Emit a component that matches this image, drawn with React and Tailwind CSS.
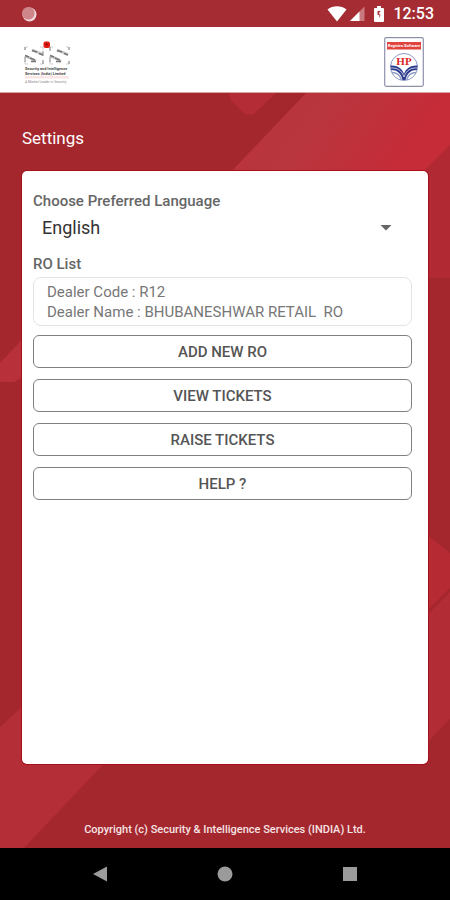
import React, { useState } from 'react';

const actions = ['ADD NEW RO', 'VIEW TICKETS', 'RAISE TICKETS', 'HELP ?'];

const dealer = {
  code: 'R12',
  name: 'BHUBANESHWAR RETAIL  RO',
};

function StatusBar() {
  return (
    <div className="flex h-[27px] items-center justify-between bg-[#a52c33] pl-[21px] pr-4 text-white">
      <svg className="size-4" viewBox="0 0 16 16" aria-hidden="true">
        <circle cx="8.5" cy="8.5" r="7" fill="#f3d9db" />
        <circle cx="7.3" cy="7.3" r="6.3" fill="#cf868b" />
      </svg>
      <div className="flex items-center">
        <svg className="h-4 w-5" viewBox="0 0 20 16" fill="#fff" aria-hidden="true">
          <path d="M0.5 3.5C6-0.7 14-0.7 19.5 3.5L10 15.5Z" />
        </svg>
        <svg className="ml-0.5 h-4 w-4" viewBox="0 0 16 16" aria-hidden="true">
          <path d="M15.5 0.5V15H1Z" fill="#c97a7f" />
          <path d="M10.5 5.5V15H1Z" fill="#fff" />
        </svg>
        <svg className="ml-2 mr-0.5 h-4 w-3" viewBox="0 0 12 16" aria-hidden="true">
          <path d="M4 0h4v2h2q1 0 1 1v12q0 1-1 1H2q-1 0-1-1V3q0-1 1-1h2z" fill="#fff" />
          <path d="M7.8 5H4.600V9H6.300V12.500L7.600 8.500H6.200V6.500Z" fill="#a52c33" />
        </svg>
        <span className="ml-1.5 text-base font-medium leading-5">12:53</span>
      </div>
    </div>
  );
}

function SisLogo() {
  return (
    <svg className="mt-0.5 h-[43px] w-[46px]" viewBox="0 0 46 43" role="img" aria-label="SIS">
      <g fill="none" stroke="#cfcfcf" strokeWidth="1">
        <path d="M1 9V6h3M16 6h3v3M1 20v3h3M16 23h3v-3M26 9V6h3M42 6h3v3M26 20v3h3M42 23h3v-3" />
      </g>
      <g fill="none" stroke="#c4c4c4" strokeWidth="2.6">
        <path d="M8 9l5 2 6 2.500M1 15l5 2 6 3.500M33 9l5 2 6 2.500M26 15l5 2 6 3.500" />
      </g>
      <g fill="none" stroke="#777" strokeWidth="1.4">
        <path d="M8 9.500l5 1.500M15 12.500l4 1.500M1 14.500l4 1.500M6 17l5 2M33 9.500l5 1.500M40 12.500l4 1.500M26 14.500l4 1.500M31 17l5 2" />
        <path d="M7 20.500h5M32 20.500h5" />
      </g>
      <g fill="none" stroke="#888" strokeWidth="1">
        <path d="M1 6v3M1 16v5M19 10v5M19 19v4M26 6v4M26 16v5M45 6v3M45 20v3" />
      </g>
      <rect x="19.500" y="0.500" width="6.500" height="6.500" rx="2" fill="#e31b12" />
      <path d="M22.700 2v3M21.200 3.500h3" stroke="#8e0d08" strokeWidth="0.8" />
      <g fontFamily="Roboto, sans-serif" fontSize="3.800" fontWeight="700" fill="#444">
        <text x="1" y="28.500">Security and Intelligence</text>
        <text x="1" y="33.500">Services (India) Limited</text>
      </g>
      <rect x="1" y="35" width="44" height="2.500" fill="#fbe6e6" />
      <text x="1" y="41.500" fontFamily="Roboto, sans-serif" fontSize="3.400" fill="#888">A Market Leader in Security</text>
    </svg>
  );
}

function HpLogo() {
  return (
    <svg className="h-[50px] w-10" viewBox="0 0 40 50" role="img" aria-label="HP">
      <rect x="0.7" y="0.7" width="38.6" height="48.6" rx="1.5" fill="#fff" stroke="#8f90ac" strokeWidth="1.2" />
      <rect x="3" y="5" width="34" height="7.5" fill="#e0443d" />
      <text x="20" y="10.4" textAnchor="middle" fontFamily="Roboto, sans-serif" fontSize="4" fontWeight="700" fill="#fff">Registro Software</text>
      <circle cx="20" cy="30" r="13.5" fill="#fff" stroke="#8e9bc4" strokeWidth="1" />
      <path d="M6.500 28.500C13 28 18 31 20 37C22 31 27 28 33.500 28.500L33 33C27 33 23 36 21.500 43H18.500C17 36 13 33 7 33Z" fill="#2b3a8c" />
      <path d="M6.500 31C13 30.500 17.500 33 20 40C22.500 33 27 30.500 33.500 31" fill="none" stroke="#fff" strokeWidth="0.7" />
      <path d="M8 35.500C13 35.500 16 38 17.500 43M32 35.500C27 35.500 24 38 22.500 43" fill="none" stroke="#8e9bc4" strokeWidth="1.4" />
      <text x="20" y="28" textAnchor="middle" fontFamily="Liberation Serif, serif" fontSize="11" fontWeight="700" fill="#dd2626">HP</text>
    </svg>
  );
}

function Backdrop() {
  return (
    <svg
      className="absolute inset-0 -z-10 h-full w-full"
      viewBox="0 0 450 755"
      preserveAspectRatio="none"
      aria-hidden="true"
    >
      <defs>
        <linearGradient id="band" x1="0" y1="0" x2="1" y2="0.4">
          <stop offset="0" stopColor="#b92d37" />
          <stop offset="0.55" stopColor="#b9363e" />
          <stop offset="0.85" stopColor="#c52c38" />
        </linearGradient>
      </defs>
      <path d="M306 0H450V185H130Z" fill="url(#band)" />
      <path d="M450 52L400 102V185H450Z" fill="#b12a33" />
      <path d="M229 0H276L256 19Q250 25 243 19L231 7Z" fill="#b42c36" />
      <path d="M0 270L30 238V280L14 289H0Z" fill="#b83039" />
      <path d="M425 440L450 460V495L425 520Z" fill="#b62a33" />
      <path d="M425 524L450 499V626L425 652Z" fill="#b12c35" />
      <path d="M0 634L30 606V660H114L24 755H0Z" fill="#b42e37" />
    </svg>
  );
}

function NavBar() {
  return (
    <nav className="flex h-[52px] items-center justify-between bg-black px-[92px]">
      <button type="button" aria-label="Back">
        <svg className="size-4" viewBox="0 0 16 16" fill="#9b9b9b"><path d="M1 8L15 0.500V15.500Z" /></svg>
      </button>
      <button type="button" aria-label="Home">
        <svg className="size-4" viewBox="0 0 16 16" fill="#9b9b9b"><circle cx="8" cy="8" r="7.500" /></svg>
      </button>
      <button type="button" aria-label="Recent apps">
        <svg className="size-4" viewBox="0 0 16 16" fill="#9b9b9b"><rect x="1" y="1" width="14" height="14" /></svg>
      </button>
    </nav>
  );
}

function App() {
  const [language, setLanguage] = useState('English');

  return (
    <div className="flex min-h-screen flex-col font-[Roboto,sans-serif]">
      <StatusBar />
      <header className="flex h-[66px] items-center justify-between border-b border-[#d9a5a8] bg-white pl-6 pr-[26px] pt-1">
        <SisLogo />
        <HpLogo />
      </header>

      <main className="relative isolate flex grow flex-col bg-[#a4272e] px-[22px]">
        <Backdrop />
        <h1 className="pt-[33px] text-[17px] leading-6 text-white">Settings</h1>

        <section className="mt-[21px] grow rounded-[5px] bg-white pb-4 pl-[11px] pr-4 pt-5 text-[#555] ring-1 ring-[#a80f19]">
          <label htmlFor="language" className="block text-[15px] font-medium leading-5 text-[#666]">
            Choose Preferred Language
          </label>
          <div className="relative pt-px">
            <select
              id="language"
              value={language}
              onChange={(e) => setLanguage(e.target.value)}
              className="block h-8 w-full appearance-none bg-transparent pl-[9px] text-lg leading-6 text-[#333] outline-none"
            >
              <option>English</option>
              <option>Hindi</option>
            </select>
            <svg className="pointer-events-none absolute right-5 top-[13px] h-2 w-3" viewBox="0 0 12 8" fill="#666" aria-hidden="true">
              <path d="M0.500 1H11.500L6 6.500Z" />
            </svg>
          </div>

          <h2 className="mt-2.5 text-[15px] font-medium leading-5 text-[#666]">RO List</h2>
          <div className="mt-[3px] rounded-lg border border-[#e4e4e4] pb-[3px] pl-[13px] pt-1 text-[15px] leading-5 text-[#777]">
            <p>Dealer Code : {dealer.code}</p>
            <p className="whitespace-pre">Dealer Name : {dealer.name}</p>
          </div>

          <div className="mt-[9px] flex flex-col gap-[11px]">
            {actions.map((action) => (
              <button
                key={action}
                type="button"
                className="h-[33px] rounded-md border border-[#808080] text-[15px] font-medium leading-5 text-[#555]"
              >
                {action}
              </button>
            ))}
          </div>
        </section>

        <footer className="flex h-[84px] items-end justify-center pb-2.5 text-[11px] font-medium leading-4 text-[#f6e3e4]">
          Copyright (c) Security &amp; Intelligence Services (INDIA) Ltd.
        </footer>
      </main>
      <NavBar />
    </div>
  );
}

export default App;
